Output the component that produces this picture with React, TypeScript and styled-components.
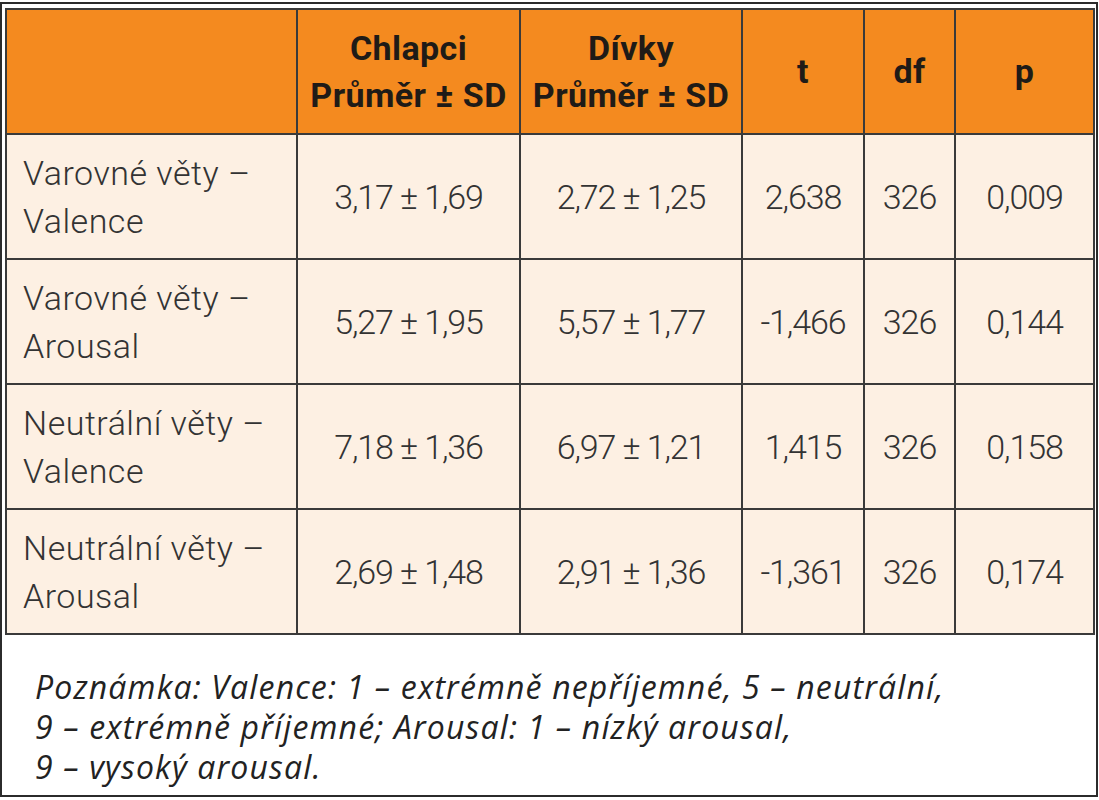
import React from "react";
import styled, { createGlobalStyle } from "styled-components";

const Global = createGlobalStyle`
  html, body { margin: 0; padding: 0; background: #ffffff; }
  body { font-family: Roboto, "Liberation Sans", sans-serif; }
`;

const Frame = styled.div`
  box-sizing: border-box;
  margin-top: 2px;
  width: 1098px;
  height: 795px;
  border: 2px solid #2b2b2b;
  padding: 4px 2px 0 3px;
  background: #ffffff;
`;

const Table = styled.table`
  border-collapse: collapse;
  table-layout: fixed;
  width: 1088px;
`;

const HeadCell = styled.th`
  background: #f48a1f;
  border: 2px solid #3a3a3a;
  height: 123px;
  padding: 0;
  font-family: Roboto, "Liberation Sans", sans-serif;
  font-weight: 700;
  font-size: 34px;
  line-height: 47px;
  letter-spacing: 0.4px;
  color: #1f1b17;
  text-align: center;
  vertical-align: middle;
`;

const BodyCell = styled.td<{ $left?: boolean }>`
  background: #fdf0e3;
  border: 2px solid #3a3a3a;
  height: 123px;
  padding: ${(p) => (p.$left ? "0 0 0 16px" : "0")};
  font-family: Roboto, "Liberation Sans", sans-serif;
  font-weight: 300;
  font-size: 34px;
  line-height: 48px;
  letter-spacing: ${(p) => (p.$left ? "0.5px" : "-1.1px")};
  color: #333333;
  text-align: ${(p) => (p.$left ? "left" : "center")};
  vertical-align: middle;
`;

const Note = styled.div`
  padding: 32px 0 0 30px;
  font-family: "Open Sans", "Liberation Sans", sans-serif;
  font-style: italic;
  font-weight: 400;
  font-size: 32px;
  line-height: 40px;
  letter-spacing: 1.15px;
  color: #222222;
`;

const widths = [291, 223, 222, 122, 91, 139];

const rows = [
  ["Varovné věty –", "Valence", "3,17 ± 1,69", "2,72 ± 1,25", "2,638", "326", "0,009"],
  ["Varovné věty –", "Arousal", "5,27 ± 1,95", "5,57 ± 1,77", "-1,466", "326", "0,144"],
  ["Neutrální věty –", "Valence", "7,18 ± 1,36", "6,97 ± 1,21", "1,415", "326", "0,158"],
  ["Neutrální věty –", "Arousal", "2,69 ± 1,48", "2,91 ± 1,36", "-1,361", "326", "0,174"],
];

export default function App() {
  return (
    <>
      <Global />
      <Frame>
        <Table>
          <colgroup>
            {widths.map((w, i) => (
              <col key={i} style={{ width: w }} />
            ))}
          </colgroup>
          <thead>
            <tr>
              <HeadCell />
              <HeadCell>
                Chlapci
                <br />
                Průměr ± SD
              </HeadCell>
              <HeadCell>
                Dívky
                <br />
                Průměr ± SD
              </HeadCell>
              <HeadCell>t</HeadCell>
              <HeadCell>df</HeadCell>
              <HeadCell>p</HeadCell>
            </tr>
          </thead>
          <tbody>
            {rows.map((r, i) => (
              <tr key={i}>
                <BodyCell $left>
                  {r[0]}
                  <br />
                  {r[1]}
                </BodyCell>
                {r.slice(2).map((c, j) => (
                  <BodyCell key={j}>{c}</BodyCell>
                ))}
              </tr>
            ))}
          </tbody>
        </Table>
        <Note>
          Poznámka: Valence: 1 – extrémně nepříjemné, 5 – neutrální,
          <br />
          9 – extrémně příjemné; Arousal: 1 – nízký arousal,
          <br />9 – vysoký arousal.
        </Note>
      </Frame>
    </>
  );
}
